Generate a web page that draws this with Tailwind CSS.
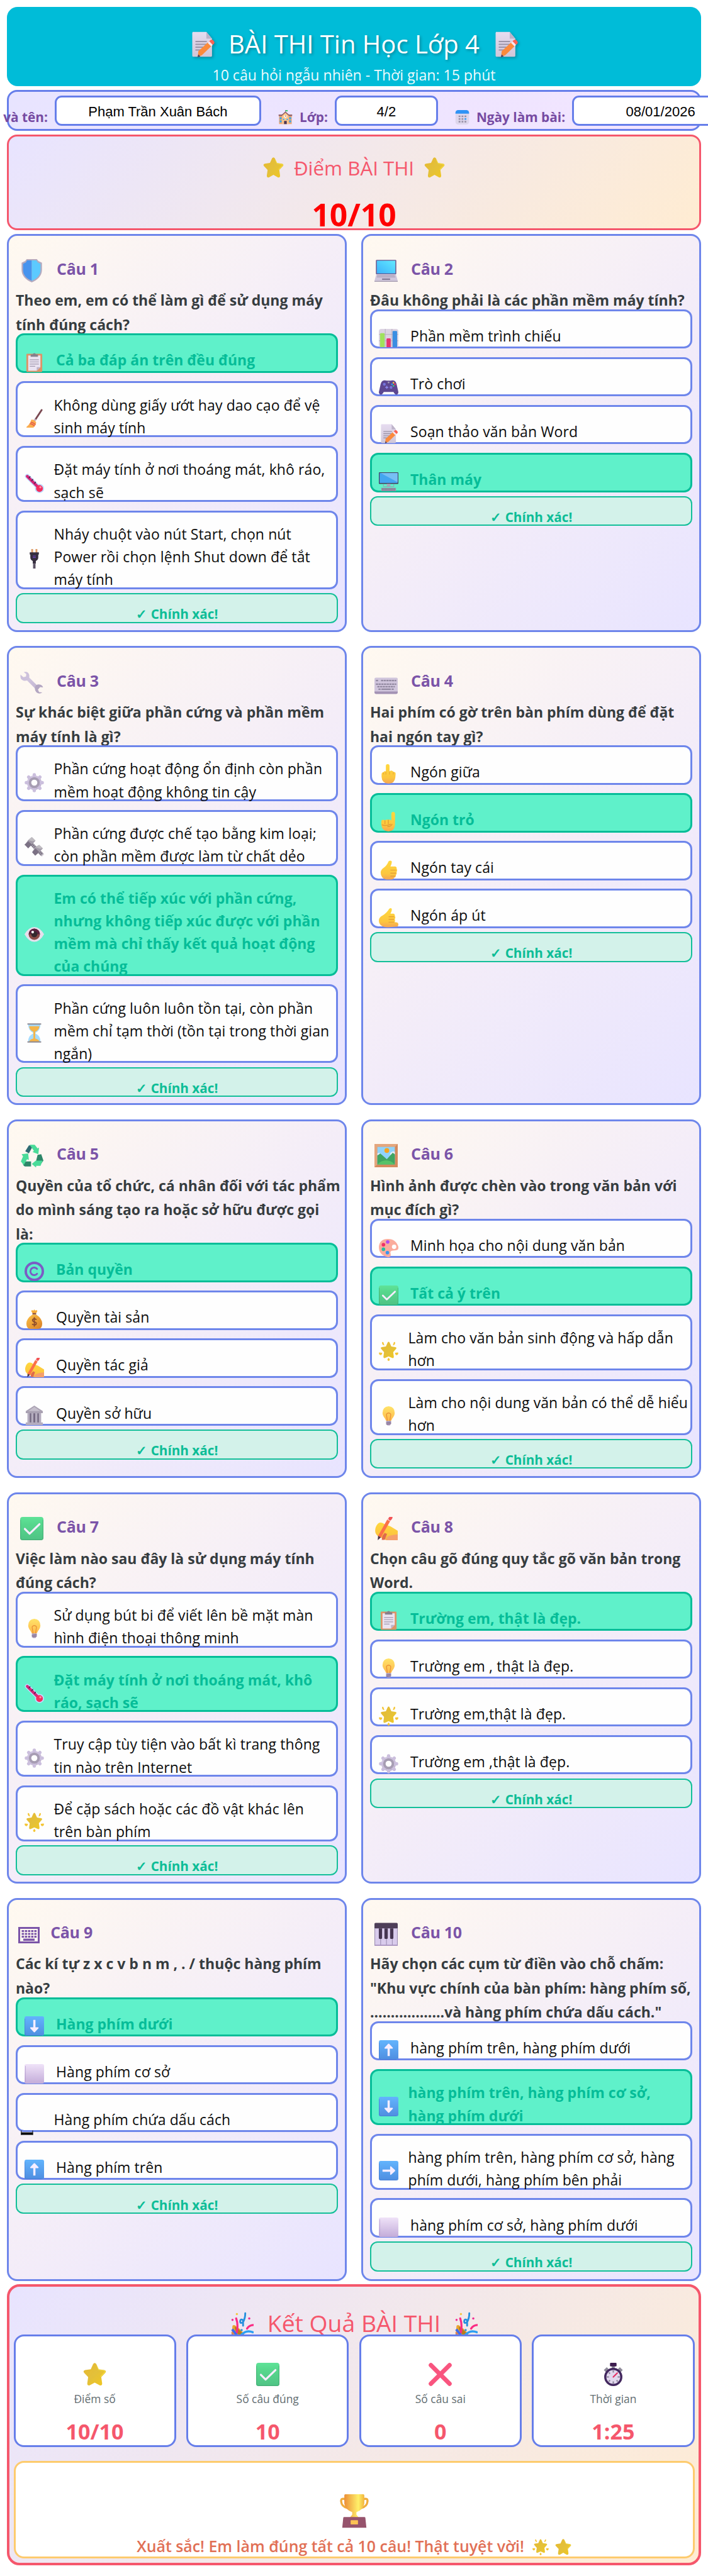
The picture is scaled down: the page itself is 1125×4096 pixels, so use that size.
<!DOCTYPE html>
<html lang="vi">
<head>
    <meta charset="UTF-8">
    <meta name="viewport" content="width=device-width, initial-scale=1.0">
    <title>BÀI THI Tin Học Lớp 4</title>
    <script src="https://cdn.jsdelivr.net/npm/@tailwindcss/browser@4"></script>
</head>
<body class="overflow-x-hidden bg-white font-['Open_Sans','Noto_Sans',sans-serif]">

<!-- Icon sprite -->
<svg class="absolute h-0 w-0" aria-hidden="true">
    <defs>
        <linearGradient id="g-gold" x1="0" y1="0" x2="1" y2="1"><stop offset="0" stop-color="#e8b92e"/><stop offset=".5" stop-color="#e3c03a"/><stop offset="1" stop-color="#f2c81e"/></linearGradient>
        <linearGradient id="g-hand" x1="0" y1="0" x2="0" y2="1"><stop offset="0" stop-color="#ffd83d"/><stop offset=".7" stop-color="#fcc63f"/><stop offset="1" stop-color="#f5a553"/></linearGradient>
        <linearGradient id="g-green" x1="0" y1="0" x2="0" y2="1"><stop offset="0" stop-color="#5fe398"/><stop offset=".3" stop-color="#57d78d"/><stop offset="1" stop-color="#4fc385"/></linearGradient>
        <linearGradient id="g-blue" x1="0" y1="0" x2="0" y2="1"><stop offset="0" stop-color="#62b4fd"/><stop offset="1" stop-color="#4f8ee0"/></linearGradient>
        <linearGradient id="g-lilac" x1="0" y1="0" x2="0" y2="1"><stop offset="0" stop-color="#efe2f8"/><stop offset="1" stop-color="#c3acd9"/></linearGradient>
        <linearGradient id="g-grey" gradientUnits="userSpaceOnUse" x1="0" y1="0" x2="32" y2="32"><stop offset="0" stop-color="#ddd3ea"/><stop offset="1" stop-color="#b9abc9"/></linearGradient>
        <linearGradient id="g-paper" x1="0" y1="0" x2="0" y2="1"><stop offset="0" stop-color="#e6dcf0"/><stop offset="1" stop-color="#cfc6d8"/></linearGradient>
        <linearGradient id="g-screen" x1="0" y1="1" x2="1" y2="0"><stop offset="0" stop-color="#3cb2fb"/><stop offset="1" stop-color="#62e9ff"/></linearGradient>
        <linearGradient id="g-bulb" x1="0" y1="0" x2="0" y2="1"><stop offset="0" stop-color="#ffe368"/><stop offset="1" stop-color="#fdb94d"/></linearGradient>
        <linearGradient id="g-cup" x1="0" y1="0" x2="1" y2="0"><stop offset="0" stop-color="#ec8f38"/><stop offset=".7" stop-color="#fff06a"/><stop offset="1" stop-color="#f2b53c"/></linearGradient>
        <linearGradient id="g-bag" x1="0" y1="0" x2="1" y2="1"><stop offset="0" stop-color="#fcc046"/><stop offset="1" stop-color="#d98027"/></linearGradient>
    </defs>

    <symbol id="memo" viewBox="0 0 32 32">
        <path fill="url(#g-paper)" d="M4 .5h17L28 9v21a1.500 1.500 0 0 1-1.500 1.500H5A1.500 1.500 0 0 1 3.500 30V2z"/>
        <path fill="#bdb3c9" d="M21 .5V9h7z"/>
        <path stroke="#9c94a8" stroke-width="1.500" stroke-linecap="round" d="M8 12.500h13M8 16h13M8 19.500h9M8 23h6"/>
        <path fill="#fb8a3c" d="m11 24.500 13-12 4.500 4.500-13 12.500-5 2z"/>
        <path fill="#f6e8f2" d="m22.500 14 2-2 4.500 4.500-2 2z"/>
        <path fill="#fa6355" d="m24.500 12 1.800-1.500q1.500-1 3 .5l1 1q1.500 1.500.2 3L29 16.500z"/>
        <path fill="#4b3f5e" d="m11 28.500-1 3.500 3.500-1z"/>
    </symbol>
    <symbol id="school" viewBox="0 0 32 32">
        <path fill="#e9a778" d="M2 12h28v19H2z"/>
        <path fill="#8c5a61" d="M1 10h30v3H1z"/>
        <path fill="#ffc78e" d="M9 31V10l7-6 7 6v21z"/>
        <path fill="#8c5a61" d="m16 3 9 8-2 1-7-6-7 6-2-1z"/>
        <circle cx="16" cy="14" r="3" fill="#fff"/><path stroke="#5b4a6b" stroke-width="1" d="M16 12v2h1.500"/>
        <path fill="#4a3557" d="M13 24h6v7h-6z"/>
        <path fill="#2ba8f4" d="M3.500 16h4v4h-4zM24.500 16h4v4h-4zM3.500 23h4v4h-4zM24.500 23h4v4h-4zM10.500 19h3v3h-3zM18.500 19h3v3h-3z"/>
        <path fill="#3ecb72" d="M16 0h5v3h-5z"/><path stroke="#7b6a80" d="M16 0v5"/>
    </symbol>
    <symbol id="calendar" viewBox="0 0 32 32">
        <rect x="1" y="0" width="30" height="32" rx="6" fill="#ded6ec"/>
        <path fill="#2f93f6" d="M1 8V6a6 6 0 0 1 6-6h18a6 6 0 0 1 6 6v2z"/>
        <path fill="#9890a6" d="M8 12h4v3.500H8zM14.500 12h4v3.500h-4zM21 12h4v3.500h-4zM8 18h4v3.500H8zM14.500 18h4v3.500h-4zM8 24h4v3.500H8zM14.500 24h4v3.500h-4zM21 24h4v3.500h-4z"/>
        <path fill="#3a9cf7" d="M21 18h4v3.500h-4z"/>
    </symbol>
    <symbol id="star" viewBox="0 0 32 32">
        <path fill="url(#g-gold)" d="M13.800 1.800q2.200-3.200 4.400 0l3.200 7 7.800 1.200q3.500 1 1.300 3.800l-5.500 5.800 1.200 8.400q.2 4-3.400 3L16 27.200 9.200 31q-3.600 1-3.400-3L7 19.600l-5.500-5.800Q-.7 11 2.800 10l7.800-1.200z"/>
        <path fill="none" stroke="#fff04a" stroke-opacity=".6" d="m19 4 2.500 5.500 7.500 1.300q1.800.7.500 2.300L24 19"/>
    </symbol>
    <symbol id="glow" viewBox="0 0 32 32">
        <path fill="url(#g-gold)" d="M14.300 2q1.700-3 3.400 0l2.800 6.200 6.500 1q3 .8 1 3.200L23.500 17.500l1 7.300q.2 3.200-2.600 2.400L16 24.500l-5.900 2.700q-2.800.8-2.600-2.400l1-7.300L4 12.400q-2-2.400 1-3.200l6.500-1z"/>
        <path fill="#f4c535" d="M5.500 1q2-.6 2.500 2l1 3.500Q4.500 5.500 5.500 1M26.500 1q-2-.6-2.500 2l-1 3.500q4.500-1 3.500-5.500M.5 18l5 .5q-.5 5-4 3.500-2-1.500-1-4M31.500 18l-5 .5q.5 5 4 3.500 2-1.500 1-4M16 26.500l2 3q0 2.500-2 2.500t-2-2.500z"/>
    </symbol>
    <symbol id="shield" viewBox="0 0 32 32">
        <path fill="#b4aabf" d="M9 0h14l2 2.500L30 5v10c0 8-6 14-14 17C8 29 2 23 2 15V5l5-2.500z"/>
        <path fill="#4794ee" d="M9.500 1.800H16v28C9 27 4 22 4 15V6.500L8 4.500z"/>
        <path fill="#5ccaff" d="M22.500 1.800H16v28c7-2.800 12-7.800 12-14.800V6.500l-4-2z"/>
    </symbol>
    <symbol id="laptop" viewBox="0 0 32 32">
        <rect x="2" y="1" width="28" height="20" rx="1.200" fill="#67568e"/>
        <path fill="url(#g-screen)" d="M3.300 2.200h25.400v17.500H3.300z"/>
        <path fill="#cfc6dc" d="M2.500 21h27l2.500 9H0z"/>
        <path stroke="#9b91aa" stroke-width="1" stroke-dasharray="1.200 .5" d="M4 22.800h24M3.500 24.500h25"/>
        <path fill="#857b96" d="M10.500 26.500h11v2h-11zM0 30h32v1H0z"/>
    </symbol>
    <symbol id="clipboard" viewBox="0 0 32 32">
        <rect x="3" y="1.500" width="26" height="30" rx="1.500" fill="#dc9468"/>
        <path fill="#eae3f1" d="M6 4.500h20v19L20 29.500H6z"/>
        <path fill="#bdb2c9" d="M20 29.500v-6h6z"/>
        <path fill="#857f8c" d="M10 2.500h3.500a2.600 2.600 0 0 1 5 0H22v4H10z"/>
        <path stroke="#a199af" stroke-width="1.200" stroke-linecap="round" d="M9 11.500h14M9 15h14M9 18.500h14M9 22h8"/>
    </symbol>
    <symbol id="broom" viewBox="0 0 32 32">
        <path stroke="#7a4952" stroke-width="3" stroke-linecap="round" d="M28 2 17.500 18"/>
        <path stroke="#c3b4c5" stroke-width="3.500" d="m18 17-2.500 3.500"/>
        <path fill="#fbac4e" d="M11 18q4-1 8 4 0 5-4.500 9H4q-2 0-.5-1.500Q9 25 11 18"/>
        <path fill="none" stroke="#e0554f" stroke-width="1.300" d="M10 22q4 0 8 4M8.500 24.500q4 0 8 4"/>
    </symbol>
    <symbol id="thermo" viewBox="0 0 32 32">
        <path stroke="#bcdcff" stroke-width="7.500" stroke-linecap="round" d="m4.500 4.500 19 19"/><circle cx="24.500" cy="24.500" r="7.500" fill="#bcdcff"/>
        <path stroke="#d62676" stroke-width="4.600" stroke-linecap="round" d="m4.500 4.500 19 19"/><circle cx="24.500" cy="24.500" r="5.600" fill="#f32d5d"/>
        <path stroke="#3b2450" stroke-width="1.400" d="m9.500 4.500-2.500 3M14 9l-2.500 3M18.500 13.500l-2.500 3"/><circle cx="26" cy="22.500" r="1.800" fill="#ff8fa5"/>
    </symbol>
    <symbol id="plug" viewBox="0 0 32 32">
        <path fill="#dd9c68" d="M11 0h3v7h-3zM18 0h3v7h-3z"/>
        <path fill="#362e3f" d="M8.500 5.500h15V9h-1v5q0 4-4 5.500V24h-5v-4.500q-4-1.500-4-5.500V9h-1z"/>
        <path fill="#5b5264" d="M14 24h4v8h-4z"/><path stroke="#7a48d8" d="M13.500 11.500h5M13.500 14h5"/>
    </symbol>
    <symbol id="chart" viewBox="0 0 32 32">
        <rect width="32" height="30" y="1" rx="4" fill="#dcd3e2"/><path stroke="#b6adbd" d="M10.500 1v30M21.500 1v30M0 10h32M0 20.500h32"/>
        <path fill="#a0e25d" d="M2 9.500A1.500 1.500 0 0 1 3.500 8H8a1.500 1.500 0 0 1 1.500 1.500V31H2z"/>
        <path fill="#e73570" d="M12.500 18a1.500 1.500 0 0 1 1.500-1.500h4a1.500 1.500 0 0 1 1.500 1.500v13h-7z"/>
        <path fill="#3b8ee2" d="M22.500 6A1.500 1.500 0 0 1 24 4.500h4.500A1.500 1.500 0 0 1 30 6v25h-7.500z"/>
    </symbol>
    <symbol id="gamepad" viewBox="0 0 32 32">
        <path fill="#5d4791" d="M6 8q3-2 7-.5h6Q23 6 26 8q2 1 3 5l3 13q0 4-3.500 4.500-2 0-4.500-4.500H8q-2.500 4.500-4.500 4.500Q0 30 0 26L3 13q1-4 3-5"/>
        <circle cx="9" cy="13.500" r="2.300" fill="#7676dd"/><circle cx="20" cy="18.500" r="2.300" fill="#7676dd"/>
        <path stroke="#8f8cf0" stroke-width="1.500" d="M10.500 18.500h5M13 16v5"/><circle cx="16" cy="10.500" r="1.400" fill="#a79fb5"/>
        <circle cx="24" cy="11" r="1.400" fill="#ffc83d"/><circle cx="21.500" cy="13.500" r="1.400" fill="#25a6f5"/><circle cx="26.500" cy="13.500" r="1.400" fill="#f03a5f"/><circle cx="24" cy="16" r="1.400" fill="#3dd47c"/>
    </symbol>
    <symbol id="desktop" viewBox="0 0 32 32">
        <rect y="1" width="32" height="19" rx="1" fill="#46415e"/><path fill="#43a6f0" d="M1.200 2.200h29.600v16.300H1.200z"/><path fill="#77bff4" d="M3 2.200h27.800v15z"/>
        <path fill="#a9a4bd" d="M13 20h6v4h-6z"/><path fill="none" stroke="#9d97b2" d="M7.500 20.500v4h17v-4"/>
        <path fill="#9a96ab" d="M4 26.500h24V32H4z"/><path stroke="#6f6a84" stroke-dasharray="1.200 .6" d="M5 28h22M5 30.200h22"/>
    </symbol>
    <symbol id="wrench" viewBox="0 0 32 32">
        <path stroke="url(#g-grey)" stroke-width="5" d="m8 8 16.500 16.500"/>
        <path fill="#cdc1dc" d="M5 1.500q6-1.500 7.500 4 .8 5-3 7.500-5 1.500-8.500-2.500Q0 8 .5 5l4 3.500L8 7.500 8.500 4z"/>
        <path fill="#b3a6c2" d="M20.500 22q1.500-4.500 6.500-3.500 3.500.5 4.500 4l-4-.5-3 3.500L26 29l4.500.5q-4 3-8 0-3-3-2-7.500"/>
    </symbol>
    <symbol id="gear" viewBox="0 0 32 32">
        <circle cx="16" cy="16" r="9.500" fill="none" stroke="url(#g-grey)" stroke-width="5"/>
        <path stroke="#cbbfdd" stroke-width="5.500" stroke-linecap="round" d="M16 3v2.500M16 26.500V29M3 16h2.500M26.500 16H29M6.800 6.800l1.800 1.800M23.400 23.400l1.800 1.800M25.200 6.800l-1.800 1.800M8.600 23.400l-1.800 1.800"/>
        <circle cx="16" cy="16" r="7" fill="#fefefe" stroke="#a79db3" stroke-width="4"/>
    </symbol>
    <symbol id="bolt" viewBox="0 0 32 32">
        <path stroke="#6e6676" stroke-width="5.500" d="m12 12 17 17"/><path stroke="#b5adbb" stroke-width="5.500" stroke-dasharray="1.300 1.300" d="m13 13 17 17"/>
        <path fill="#a29ba8" d="m12 0 6 6-6 6.500L0 13.500 6 5z"/><path fill="#7b7184" d="m6 7 6 5-6 6.500-6-6z"/><path fill="#bfbcc1" d="m12 0 6 6-5 1-7-2z"/>
        <path fill="#a29ba8" d="m24 13 6 5.500-6 6.500-6.500 5.500-5-6L18 16z"/><path fill="#7b7184" d="m18 18.500 6 6-6.500 6-5-5.500z"/><path fill="#bfbcc1" d="m24 13 6 5.500-5 .5-7-2.500z"/>
    </symbol>
    <symbol id="eye" viewBox="0 0 32 32">
        <path fill="#e6dfec" d="M0 16Q7 4 16 4t16 12q-7 12.500-16 12.500T0 16"/>
        <circle cx="16" cy="16" r="9.300" fill="#8b4b47"/><path fill="#5b2140" d="M6.700 16a9.300 9.300 0 0 1 18.600 0z"/>
        <circle cx="16" cy="16" r="5" fill="#33282e"/><circle cx="13.300" cy="12.500" r="2.200" fill="#fff"/>
    </symbol>
    <symbol id="hourglass" viewBox="0 0 32 32">
        <path fill="#a6dcff" d="M6 2h20q0 10-8 13.500v1.500q8 3 8 13H6q0-10 8-13v-1.500Q6 12 6 2"/>
        <path fill="#f5b54a" d="M7.500 5h17q-1 7-7 9v11q5 1 7 5h-17q2-4 7-5V14q-6-2-7-9"/>
        <path stroke="#8c8992" stroke-width="2" stroke-linecap="round" d="M5.500 1.200h21M5.500 30.800h21"/>
    </symbol>
    <symbol id="keyboard" viewBox="0 0 32 32">
        <rect y="9" width="32" height="21" rx="2" fill="#d0c5dc"/><path fill="#a392b4" d="M0 28h32v1.500q0 2-2 2H2q-2 0-2-2z"/>
        <path stroke="#9289a0" stroke-width="2" stroke-dasharray="3 .7" d="M2 13h3M9 13h21M2 18h28M4 21.500h24"/><path stroke="#9289a0" stroke-width="2" d="M5.500 25h3M9.500 25h13M23.500 25h3"/>
    </symbol>
    <symbol id="middle" viewBox="0 0 32 32">
        <path fill="url(#g-hand)" d="M11.500 3q0-3 3-3t3 3v9q2-2 4.500-1 1.500.5 2 2 3.500-.5 3.500 3l-.5 6q-1 10-11 10Q5 32 4.500 21v-4q0-3.500 3-3.500 1-3 4-1.500z"/>
        <path stroke="#e8a52f" fill="none" d="M7.500 13.500 8 17M11.500 12v5M17.500 12v5M24 13l-.5 4"/>
    </symbol>
    <symbol id="index" viewBox="0 0 32 32">
        <path fill="url(#g-hand)" d="M20.500 3q0-3 3-3t3 3v17q0 11-10.500 12Q5 32 4 21v-5q0-3 3-3 2 0 3 1 2-2 5-1 3-1 5.500 1z"/>
        <path stroke="#e29a35" fill="none" stroke-width="1.300" d="M10 14v6M15.500 13v7M5 21q5 3 15-1M14 24q6 0 8-4"/>
    </symbol>
    <symbol id="thumb" viewBox="0 0 32 32">
        <path fill="url(#g-hand)" d="M16 1.500q3-2 5 0 1 2-2 8.500h8q3 1 2 4 2 2 0 5 1 3-1 5 0 4-3 4.500-1 3-5 3h-8Q3 29 3 20q0-4 4-7 6-4 9-11.500"/>
        <path stroke="#e29a35" fill="none" stroke-width="1.200" d="M19 16h9M19 21h9M19 26h7"/>
    </symbol>
    <symbol id="callme" viewBox="0 0 32 32">
        <path fill="url(#g-hand)" d="M17 1q3-2 4 0 1 3-2 8h5q3 1 2 4 2 2 0 5 1 2 0 5l4 .5q2 1 2 3 0 4-4 4l-13 1Q0 31 0 20q0-5 6-8 7-4 11-11"/>
        <path stroke="#e29a35" fill="none" stroke-width="1.200" d="M16 14h9M16 18.500h9M16 23h9"/>
    </symbol>
    <symbol id="recycle" viewBox="0 0 32 32">
        <path fill="#2e6b72" d="M12 2h6l-6 11-5-3z"/><path fill="#4adb99" d="M13 1h7l4 5 2-1-1 9-8-3 2-1.500z"/>
        <path fill="#2d8668" d="m24 15 5-1 3 9-4 5-6-5z"/><path fill="#4adb99" d="M22 23h9l-3 7h-6v2.500l-6-5 6-5z"/>
        <path fill="#2d8668" d="M6 24h9v7H8q-3 0-4-3z"/><path fill="#4adb99" d="m2 14 9-1 1 9-2.500-1L5 29l-4-5 3-7z"/>
    </symbol>
    <symbol id="copyright" viewBox="0 0 32 32">
        <circle cx="16" cy="16" r="14" fill="none" stroke="#7b5cc4" stroke-width="4"/>
        <path fill="none" stroke="#7b5cc4" stroke-width="3" stroke-linecap="round" d="M20.500 12a6.200 6.200 0 1 0 0 8"/>
    </symbol>
    <symbol id="moneybag" viewBox="0 0 32 32">
        <path fill="#f7ad39" d="m12 1 2.500 1L16 0l1.500 2L20 1l1 2-2.500 4h-5L11 3z"/><path fill="#8b5546" d="M13 6h6v2.500h-6z"/>
        <path fill="url(#g-bag)" d="M13 8.500h6Q29 15 29 23.500q0 8.500-7 8.500H10q-7 0-7-8.500Q3 15 13 8.500"/>
        <path fill="none" stroke="#8b4b2c" stroke-width="1.800" stroke-linecap="round" d="M19 16.500q-3-2-5.500 0-1.500 2.500 2.500 4 4.500 1 3 4-2.500 2-6 0M16 13.500v14"/>
    </symbol>
    <symbol id="writing" viewBox="0 0 32 32">
        <path fill="url(#g-hand)" d="M5 9q4-3 9 1l8 3 10 6v13H17q-2 0-4-2Q1 27 1 19q0-6 4-10"/>
        <path fill="#f59f6c" d="M17 31q-1-6 15-7v8H17z"/>
        <path stroke="#fb7048" stroke-width="4.500" d="M20 4 7 27"/><path stroke="#f2d9dc" stroke-width="4.500" d="m21.500 1.500-2 3.500"/><path stroke="#f25454" stroke-width="4.500" stroke-linecap="round" d="m22.500 1-1 1.500"/>
        <path fill="#4b3146" d="m5 26 3.800 2-4.300 4z"/><path fill="#df6a4c" d="M11 26q4-6 8-7l-5 12.500h-4z"/><path fill="#ffcc3d" d="M15 18q4-3 6 0l-3 5q-5 1-3-5"/>
    </symbol>
    <symbol id="bank" viewBox="0 0 32 32">
        <path fill="#a9a1b2" d="m16 0 14 9v3.500H2V9z"/><path fill="#c5bfcc" d="m16 2 10 7H6z"/>
        <path fill="#756a83" d="M5 12.500h22V28H5z"/><path fill="#b5adbf" d="M5 12.500h3.500V28H5zM11 12.500h3.500V28H11zM17.500 12.500H21V28h-3.500zM23.500 12.500H27V28h-3.500zM2 27.500h28V32H2z"/>
    </symbol>
    <symbol id="picture" viewBox="0 0 32 32">
        <path fill="#d48a5d" d="M0 0h32v32H0z"/><path fill="#e4a67c" d="M0 0h32l-4 4H4v24l-4 4z"/><path fill="#8fd3fb" d="M4 4h24v24H4z"/>
        <circle cx="17" cy="9" r="3.300" fill="#f5a31f"/><path fill="#e3edfa" d="M4 13q4-2 6 2h-6zM22 12q4-3 6-1v4h-7z"/>
        <path fill="#3fa562" d="M4 28V16l4-3 9 8 8-9 3 2v14z"/><path fill="#57c268" d="M4 28q12-11 24 0z"/>
    </symbol>
    <symbol id="palette" viewBox="0 0 32 32">
        <path fill="#fbac9d" d="M15 2Q28 2 32 15q1 6-6 6-8 0-7 4 2 7-4 7Q0 29 0 15 1 2 15 2"/>
        <circle cx="14.500" cy="7" r="2.900" fill="#b14cf0"/><circle cx="7.500" cy="11.500" r="2.900" fill="#ef3167"/><circle cx="7.500" cy="19" r="2.900" fill="#29bda2"/><circle cx="14" cy="24.500" r="2.900" fill="#3a95ee"/><circle cx="25" cy="15" r="3.600" fill="#fff"/>
    </symbol>
    <symbol id="check" viewBox="0 0 32 32">
        <rect width="32" height="32" rx="3.500" fill="url(#g-green)"/><path fill="none" stroke="#3da46d" stroke-opacity=".6" d="M.5 4v24q0 3.500 3 3.500h25q3 0 3-3.500V4"/>
        <path fill="none" stroke="#f7edff" stroke-width="2.800" stroke-linecap="round" stroke-linejoin="round" d="m6.500 16.500 6.500 6.500L26.500 10"/>
    </symbol>
    <symbol id="bulb" viewBox="0 0 32 32">
        <path fill="url(#g-bulb)" d="M16 0q10 1 10 11 0 4-4 9l-2 4h-8l-2-4q-4-5-4-9Q6 1 16 0"/>
        <path fill="none" stroke="#e98f35" stroke-width="1.300" d="m14 24-1.500-10q0-2.500 3.500-3 3.500.5 3.500 3L18 24"/>
        <path fill="#ab9ab8" d="M12 24h8v5l-2 2.500h-4L12 29z"/><path stroke="#7f6c90" d="m12 27.500 8-1.500M12 29.800l8-1.500"/>
    </symbol>
    <symbol id="tile" viewBox="0 0 32 32">
        <rect width="32" height="32" rx="3" fill="url(#g-blue)"/><path fill="none" stroke="#3f74cf" stroke-opacity=".6" d="M.5 4v24q0 3.500 3 3.500h25"/>
    </symbol>
    <symbol id="arrow-down" viewBox="0 0 32 32">
        <use href="#tile"/><path fill="#f7eeff" d="M14.300 6h3.600v12h4.500q1 .5.500 1.500l-6 6.500q-.8.500-1.600 0l-6-6.500q-.5-1 .5-1.500h4.500z"/>
    </symbol>
    <symbol id="arrow-up" viewBox="0 0 32 32">
        <use href="#tile"/><path fill="#f7eeff" d="M14.300 26h3.600V14h4.500q1-.5.500-1.500L16.900 6q-.8-.5-1.600 0l-6 6.500q-.5 1 .5 1.500h4.500z"/>
    </symbol>
    <symbol id="arrow-right" viewBox="0 0 32 32">
        <use href="#tile"/><path fill="#f7eeff" d="M6 14.200h12.500V9.500q.5-1 1.500-.5l6.500 6q.5.900 0 1.800l-6.500 6q-1 .5-1.500-.5v-4.500H6z"/>
    </symbol>
    <symbol id="square" viewBox="0 0 32 32">
        <rect width="32" height="32" rx="3" fill="url(#g-lilac)"/><path stroke="#a98fc4" stroke-opacity=".6" d="M1.500 3v26"/>
    </symbol>
    <symbol id="piano" viewBox="0 0 32 32">
        <path fill="#d9ccec" d="M0 6h32v26H0z"/><path fill="#4e3f58" d="M0 2Q0 .5 1.500.5h29Q32 .5 32 2v6H0z"/>
        <path stroke="#9385a8" stroke-width=".8" d="M8.500 22v9M16.500 22v9M24.500 22v9M.5 8v23M31.500 8v23"/><path fill="#a893bf" d="M0 30.500h32V32H0z"/>
        <path fill="#463651" d="M6 8h4.500v13q0 1.500-1 1.500H7Q6 22.500 6 21zM13.700 8h4.600v13q0 1.500-1 1.500h-2.600q-1 0-1-1.500zM21.500 8H26v13q0 1.500-1 1.500h-2.500q-1 0-1-1.500z"/>
    </symbol>
    <symbol id="keys" viewBox="0 0 34 26">
        <path fill="none" stroke="#7b54a8" stroke-width="3" d="M1.500 1.500h31v23h-31z"/>
        <path stroke="#7b54a8" stroke-width="3" stroke-dasharray="3.600 1.400" d="M5.500 6.500h23.700M5.500 11h23.700M5.500 15.500h23.700"/><path fill="#7b54a8" d="M8 18.500h18V22H8z"/>
    </symbol>
    <symbol id="party" viewBox="0 0 32 32">
        <path fill="#e9a52f" d="M3 19q2-1.500 4 0 11 7 14 16-1 4-5 5L0 48z"/><path fill="#b57d1e" d="M6 20q9 5 14 15-4 2-9-4-5-5-5-11"/>
        <path stroke="#3a6cf0" stroke-width="3.500" d="m2.500 24 12 15M1.500 31l8 10"/><path stroke="#dd8352" stroke-width="2.500" d="m2 28 10 13"/>
        <path fill="none" stroke="#fb2b83" stroke-width="2.800" stroke-linecap="round" d="M8 9q3 8 1 19M23 23q3-5 9-5"/>
        <path fill="none" stroke="#2d9ff2" stroke-width="3" stroke-linecap="round" d="M14 33q7-9 17-5"/>
        <path fill="none" stroke="#2690de" stroke-width="2.500" stroke-linecap="round" d="M20.500 2q0 7-3 12-4 3-4-1t4-1.500V19"/>
        <circle cx="9" cy="3" r="1.500" fill="#f5c842"/><circle cx="3" cy="11" r="1.500" fill="#ef2b94"/><circle cx="26" cy="9" r="1.500" fill="#ef2b94"/><circle cx="15.500" cy="25" r="1.500" fill="#2690de"/><circle cx="27.500" cy="36" r="1.500" fill="#efa64a"/>
    </symbol>
    <symbol id="cross" viewBox="0 0 32 32">
        <path stroke="#f9557f" stroke-width="6" stroke-linecap="round" d="m3.200 3.200 25.600 25.600M28.800 3.200 3.200 28.800"/>
    </symbol>
    <symbol id="stopwatch" viewBox="0 0 32 32">
        <path fill="#8e8a99" d="m3 10 4-4 4 4-4 4zM29 10l-4-4-4 4 4 4zM14 4h4v4h-4z"/><rect x="11.500" y="0" width="9" height="5" rx="1.200" fill="#3d1d4e"/>
        <circle cx="16" cy="19.500" r="11" fill="#e2d8ee" stroke="#42275e" stroke-width="3"/>
        <path stroke="#8b859a" stroke-width="1.800" d="M16 10.500v3M16 25.500v3M7 19.500h3M22 19.500h3M9.800 13.300l1.700 1.700M20.500 24l1.700 1.700M9.800 25.700l1.700-1.700"/><path stroke="#e52e63" stroke-width="1.800" stroke-linecap="round" d="m16 19.500 5.500-5.500"/>
    </symbol>
    <symbol id="trophy" viewBox="0 0 32 32">
        <path fill="none" stroke="#f0ac3c" stroke-width="2" d="M8 5Q3 3 3.500 7q.5 5 6 6M24 5q5-2 4.500 2-.5 5-6 6"/>
        <path fill="url(#g-cup)" d="M6.500 1q0-1 1-1h17q1 0 1 1v8q-1 6-7.500 8v2.500l2.500 3h-9l2.500-3V17Q7.500 15 6.500 9z"/>
        <path fill="#96536c" d="M5.500 22.500q0-.8 1-.8h19q1 0 1 .8L27.500 32h-23z"/><rect x="12.500" y="24.700" width="7" height="4" rx=".5" fill="#fcc254"/>
    </symbol>
</svg>

<main class="mx-auto w-[1103px] pt-[10.7px]">

    <!-- Header -->
    <header class="h-[126.5px] rounded-[17px] bg-[#00bcd8] pt-[31.8px] text-center text-white">
        <h1 class="flex items-center justify-center gap-[21px] text-[40px] leading-[56px] text-shadow-[2px_2px_4px_rgba(0,0,0,0.3)]">
            <svg class="size-[41px] drop-shadow-[2px_2px_2px_rgba(0,0,0,0.25)]"><use href="#memo"/></svg>
            <span>BÀI THI Tin Học Lớp 4</span>
            <svg class="size-[41px] drop-shadow-[2px_2px_2px_rgba(0,0,0,0.25)]"><use href="#memo"/></svg>
        </h1>
        <p class="mt-[4.5px] text-[23.1px] leading-8 text-white/95">10 câu hỏi ngẫu nhiên - Thời gian: 15 phút</p>
    </header>

    <!-- Student info -->
    <section class="mt-[5.8px] flex h-[65.4px] items-center justify-center gap-[27px] rounded-[16px] border-3 border-[#667eea] bg-linear-135 from-[#e8e4ff] to-[#f3e5ff] text-[20.8px] font-bold whitespace-nowrap text-[#764ba2]">
        <div class="flex shrink-0 items-center gap-[11px]">
            <span class="flex w-[141px] justify-end pt-[20px] leading-6">Họ và tên:</span>
            <div class="flex h-[48px] w-[328px] items-center justify-center rounded-[11px] border-3 border-[#667eea] bg-white pt-1 font-['Liberation_Sans',Arial,sans-serif] text-[22px] font-normal text-black">Phạm Trần Xuân Bách</div>
        </div>
        <div class="flex shrink-0 items-center gap-[11px]">
            <svg class="mt-[21px] size-[23px]"><use href="#school"/></svg>
            <span class="pt-[20px] leading-6">Lớp:</span>
            <div class="flex h-[48px] w-[164px] items-center justify-center rounded-[11px] border-3 border-[#667eea] bg-white pt-1 font-['Liberation_Sans',Arial,sans-serif] text-[22px] font-normal text-black">4/2</div>
        </div>
        <div class="flex shrink-0 items-center gap-[11px]">
            <svg class="mt-[21px] size-[23px]"><use href="#calendar"/></svg>
            <span class="pt-[20px] leading-6">Ngày làm bài:</span>
            <div class="flex h-[48px] w-[281px] items-center justify-center rounded-[11px] border-3 border-[#667eea] bg-white pt-1 font-['Liberation_Sans',Arial,sans-serif] text-[22px] font-normal text-black">08/01/2026</div>
        </div>
    </section>

    <!-- Score -->
    <section class="mt-[5.2px] h-[152.8px] rounded-[16px] border-3 border-[#f5576c] bg-linear-135 from-[#e8e4ff] to-[#ffecd2] pt-[28px] text-center">
        <h2 class="flex items-center justify-center gap-4 text-[31.3px] leading-[44px] text-[#f5576c]">
            <svg class="size-[33px]"><use href="#star"/></svg>
            <span>Điểm BÀI THI</span>
            <svg class="size-[33px]"><use href="#star"/></svg>
        </h2>
        <div class="mt-[22.5px] text-[49.7px] leading-[60px] font-bold text-[#ff0000]">10/10</div>
    </section>

    <!-- Questions -->
    <section id="questions" class="mt-[6px] grid grid-cols-2 grid-rows-[632.5px_730.3px_570.6px_622.6px_609px] gap-x-[23px] gap-y-[22.3px]"></section>

    <!-- Results -->
    <section class="mt-[5.5px] h-[446.6px] rounded-[20px] border-4 border-[#f5576c] bg-linear-135 from-[#e8e4ff] to-[#ffecd2] px-[6.5px] pt-[33.3px]">
        <h2 class="flex items-center justify-center gap-[22px] text-[37.3px] leading-[50px] text-[#f5576c]">
            <svg class="size-[37px] overflow-visible"><use href="#party"/></svg>
            <span>Kết Quả BÀI THI</span>
            <svg class="size-[37px] overflow-visible"><use href="#party"/></svg>
        </h2>
        <div id="stats" class="relative -mt-[7px] grid grid-cols-4 gap-[16.5px]"></div>
        <div class="mt-[22px] flex h-[155px] flex-col items-center rounded-[16px] border-3 border-[#fdcb6e] bg-white pt-[50.5px]">
            <svg class="size-[56px]"><use href="#trophy"/></svg>
            <div class="mt-[11px] flex items-center gap-[10px] text-[24.9px] leading-[34px] font-semibold text-[#e17055]">
                <span class="mr-[3px]">Xuất sắc! Em làm đúng tất cả 10 câu! Thật tuyệt vời!</span>
                <svg class="mt-1 size-[26px]"><use href="#glow"/></svg>
                <svg class="mt-1 size-[26px]"><use href="#star"/></svg>
            </div>
        </div>
    </section>
</main>

<script>
// Each option: [icon, lines of text, is correct]
const questions = [
    { icon: 'shield', title: ['Theo em, em có thể làm gì để sử dụng máy', 'tính đúng cách?'], options: [
        ['clipboard', ['Cả ba đáp án trên đều đúng'], true],
        ['broom', ['Không dùng giấy ướt hay dao cạo để vệ', 'sinh máy tính']],
        ['thermo', ['Đặt máy tính ở nơi thoáng mát, khô ráo,', 'sạch sẽ']],
        ['plug', ['Nháy chuột vào nút Start, chọn nút', 'Power rồi chọn lệnh Shut down để tắt', 'máy tính']],
    ] },
    { icon: 'laptop', title: ['Đâu không phải là các phần mềm máy tính?'], options: [
        ['chart', ['Phần mềm trình chiếu']],
        ['gamepad', ['Trò chơi']],
        ['memo', ['Soạn thảo văn bản Word']],
        ['desktop', ['Thân máy'], true],
    ] },
    { icon: 'wrench', title: ['Sự khác biệt giữa phần cứng và phần mềm', 'máy tính là gì?'], options: [
        ['gear', ['Phần cứng hoạt động ổn định còn phần', 'mềm hoạt động không tin cậy']],
        ['bolt', ['Phần cứng được chế tạo bằng kim loại;', 'còn phần mềm được làm từ chất dẻo']],
        ['eye', ['Em có thể tiếp xúc với phần cứng,', 'nhưng không tiếp xúc được với phần', 'mềm mà chỉ thấy kết quả hoạt động', 'của chúng'], true],
        ['hourglass', ['Phần cứng luôn luôn tồn tại, còn phần', 'mềm chỉ tạm thời (tồn tại trong thời gian', 'ngắn)']],
    ] },
    { icon: 'keyboard', title: ['Hai phím có gờ trên bàn phím dùng để đặt', 'hai ngón tay gì?'], options: [
        ['middle', ['Ngón giữa']],
        ['index', ['Ngón trỏ'], true],
        ['thumb', ['Ngón tay cái']],
        ['callme', ['Ngón áp út']],
    ] },
    { icon: 'recycle', title: ['Quyền của tổ chức, cá nhân đối với tác phẩm', 'do mình sáng tạo ra hoặc sở hữu được gọi', 'là:'], options: [
        ['copyright', ['Bản quyền'], true],
        ['moneybag', ['Quyền tài sản']],
        ['writing', ['Quyền tác giả']],
        ['bank', ['Quyền sở hữu']],
    ] },
    { icon: 'picture', title: ['Hình ảnh được chèn vào trong văn bản với', 'mục đích gì?'], options: [
        ['palette', ['Minh họa cho nội dung văn bản']],
        ['check', ['Tất cả ý trên'], true],
        ['glow', ['Làm cho văn bản sinh động và hấp dẫn', 'hơn']],
        ['bulb', ['Làm cho nội dung văn bản có thể dễ hiểu', 'hơn']],
    ] },
    { icon: 'check', title: ['Việc làm nào sau đây là sử dụng máy tính', 'đúng cách?'], options: [
        ['bulb', ['Sử dụng bút bi để viết lên bề mặt màn', 'hình điện thoại thông minh']],
        ['thermo', ['Đặt máy tính ở nơi thoáng mát, khô', 'ráo, sạch sẽ'], true],
        ['gear', ['Truy cập tùy tiện vào bất kì trang thông', 'tin nào trên Internet']],
        ['glow', ['Để cặp sách hoặc các đồ vật khác lên', 'trên bàn phím']],
    ] },
    { icon: 'writing', title: ['Chọn câu gõ đúng quy tắc gõ văn bản trong', 'Word.'], options: [
        ['clipboard', ['Trường em, thật là đẹp.'], true],
        ['bulb', ['Trường em , thật là đẹp.']],
        ['glow', ['Trường em,thật là đẹp.']],
        ['gear', ['Trường em ,thật là đẹp.']],
    ] },
    { icon: 'keys', title: ['Các kí tự z x c v b n m , . / thuộc hàng phím', 'nào?'], options: [
        ['arrow-down', ['Hàng phím dưới'], true],
        ['square', ['Hàng phím cơ sở']],
        ['space', ['Hàng phím chứa dấu cách']],
        ['arrow-up', ['Hàng phím trên']],
    ] },
    { icon: 'piano', title: ['Hãy chọn các cụm từ điền vào chỗ chấm:', '"Khu vực chính của bàn phím: hàng phím số,', '..................và hàng phím chứa dấu cách."'], options: [
        ['arrow-up', ['hàng phím trên, hàng phím dưới']],
        ['arrow-down', ['hàng phím trên, hàng phím cơ sở,', 'hàng phím dưới'], true],
        ['arrow-right', ['hàng phím trên, hàng phím cơ sở, hàng', 'phím dưới, hàng phím bên phải']],
        ['square', ['hàng phím cơ sở, hàng phím dưới']],
    ] },
];

// Option height by number of text lines
const optionHeight = ['', 'h-[62.4px]', 'h-[89px]', 'h-[125px]', 'h-[161.2px]'];

function renderOption([icon, lines, correct]) {
    const color = correct
        ? 'border-[#05bd98] bg-[#5ff1ca] font-bold text-[#05bd98]'
        : 'border-[#6e86eb] bg-[#fefefe] tracking-[0.1px] text-[#0d0d0d]';
    const isSpace = icon === 'space';
    const gap = isSpace || lines.length > 1 ? 'gap-[15.2px]' : 'gap-[18.7px]';
    // The space bar mark hangs over the bottom edge of its option
    const picture = isSpace
        ? '<span class="flex w-[31px] shrink-0 -translate-x-[5.6px] translate-y-[17.6px]"><span class="h-[7px] w-[19px] border-x border-b-4 border-[#0d0d0d]"></span></span>'
        : `<svg class="size-[31px] shrink-0"><use href="#${icon}"/></svg>`;
    return `
        <div class="flex ${optionHeight[lines.length]} ${gap} items-center rounded-[13px] border-3 ${color} pt-[29px] pl-[11.3px]">
            ${picture}
            <div class="mb-[7px] text-[23px] leading-[36.2px] whitespace-nowrap">${lines.join('<br>')}</div>
        </div>`;
}

function renderQuestion(q, i) {
    const head = q.icon === 'keys'
        ? '<svg class="mt-1 ml-[3.7px] h-[26px] w-[34px]"><use href="#keys"/></svg>'
        : `<svg class="ml-[6.5px] size-[37px]"><use href="#${q.icon}"/></svg>`;
    const gap = q.icon === 'keys' ? 'gap-[17.5px]' : 'gap-[21.5px]';
    return `
        <article class="rounded-[16px] border-3 border-[#6e86eb] bg-linear-135 from-[#fff9f0] via-[#f4edf8] to-[#e8e4ff] px-[11px]">
            <div class="flex h-[82.9px] ${gap} items-center pt-[27px]">
                ${head}
                <h3 class="mb-[7px] text-[25px] leading-8 font-bold tracking-[-0.3px] text-[#7b54a8]">Câu ${i + 1}</h3>
            </div>
            <p class="text-[23px] leading-[38.45px] font-bold whitespace-nowrap text-[#363c3f]">${q.title.join('<br>')}</p>
            <div class="-mt-[4.8px] flex flex-col gap-[13.7px]">${q.options.map(renderOption).join('')}</div>
            <div class="mt-[6.3px] flex h-[47.6px] items-center justify-center gap-1.5 rounded-[12px] border-2 border-[#13bf99] bg-[#d3f2ea] pt-[20px] text-[20.7px] font-bold text-[#0dbd97]"><span>✓</span>Chính xác!</div>
        </article>`;
}

const stats = [
    ['star', 'Điểm số', '10/10'],
    ['check', 'Số câu đúng', '10'],
    ['cross', 'Số câu sai', '0'],
    ['stopwatch', 'Thời gian', '1:25'],
];

document.getElementById('questions').innerHTML = questions.map(renderQuestion).join('');
document.getElementById('stats').innerHTML = stats.map(([icon, label, value]) => `
    <div class="flex h-[178.5px] flex-col items-center rounded-[16px] border-3 border-[#667eea] bg-white pt-[42px]">
        <svg class="size-[43px]"><use href="#${icon}"/></svg>
        <div class="mt-[8px] text-[17.4px] leading-6 text-[#636e72]">${label}</div>
        <div class="mt-[17.5px] text-[34.1px] leading-[44px] font-bold text-[#f5576c]">${value}</div>
    </div>`).join('');
</script>
</body>
</html>
